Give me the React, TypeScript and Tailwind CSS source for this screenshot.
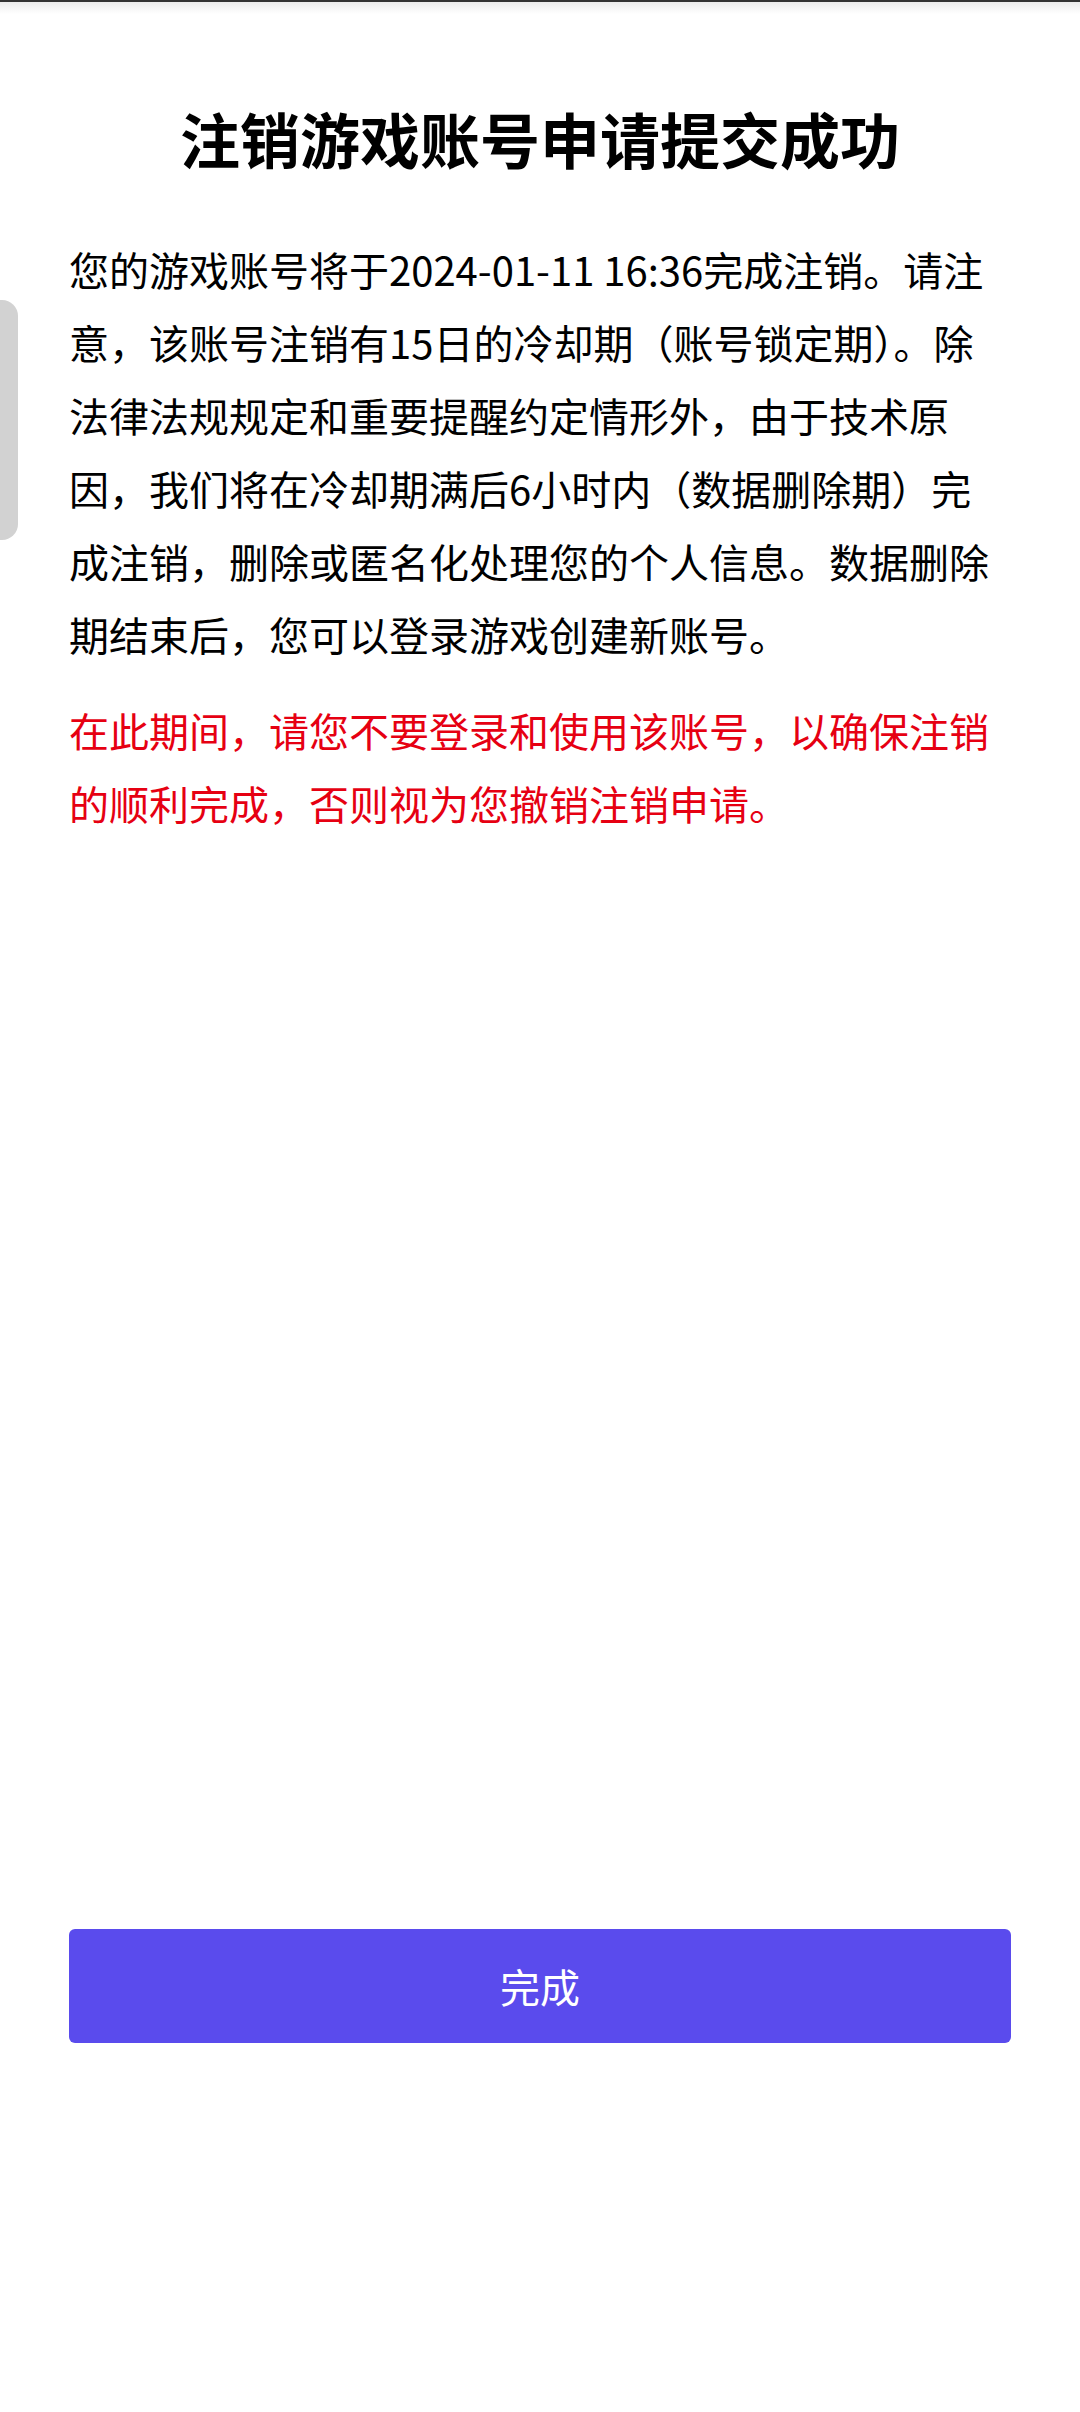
export default function App() {
  return (
    <div className="relative flex h-[2412px] w-full flex-col bg-white font-['Noto_Sans_CJK_SC',sans-serif] text-black">
      {/* top edge + soft shadow */}
      <div className="h-[2px] bg-[#333333]" />
      <div className="h-[12px] bg-linear-to-b from-[#ececec] to-white" />

      <h1 className="mt-[84px] text-center text-[60px] font-bold leading-[80px]">
        注销游戏账号申请提交成功
      </h1>

      <div className="mt-[55px] px-[69px]">
        <p className="text-[40px] leading-[73px]">
          您的游戏账号将于2024-01-11 16:36完成注销。请注意，该账号注销有15日的冷却期（账号锁定期）。除法律法规规定和重要提醒约定情形外，由于技术原因，我们将在冷却期满后6小时内（数据删除期）完成注销，删除或匿名化处理您的个人信息。数据删除期结束后，您可以登录游戏创建新账号。
        </p>
        <p className="mt-[23px] text-[40px] leading-[73px] text-[#e60012]">
          在此期间，请您不要登录和使用该账号，以确保注销的顺利完成，否则视为您撤销注销申请。
        </p>
      </div>

      <div className="flex-1" />

      <div className="px-[69px] pb-[369px]">
        <button
          type="button"
          className="flex h-[114px] w-full items-center justify-center rounded-[6px] bg-[#5a4bed] text-[40px] text-white"
        >
          完成
        </button>
      </div>

      {/* edge gesture handle */}
      <div className="absolute left-0 top-[300px] h-[240px] w-[18px] rounded-r-[16px] bg-[#d2d2d2]" />
    </div>
  );
}
